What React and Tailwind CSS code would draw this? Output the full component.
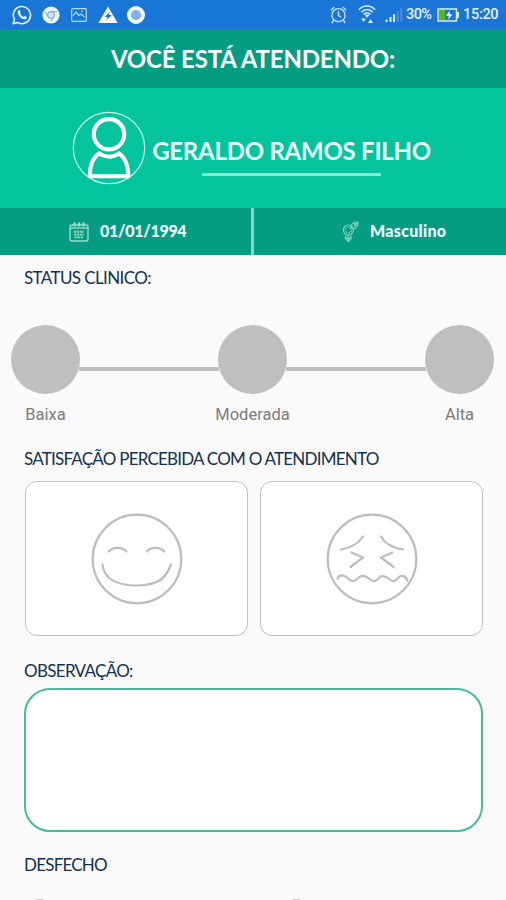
import React from "react";

const sectionLabel = "whitespace-nowrap font-['Lato',sans-serif] text-[17px] leading-[20px] text-[#15304f]";

function WhatsApp() {
  return (
    <svg width="20" height="20" viewBox="0 0 20 20" fill="none" stroke="#e6f2ff">
      <path d="M1.200 18.800 2.400 14.200A8.600 8.600 0 1 1 5.800 17.600Z" strokeWidth="1.600" strokeLinejoin="round" />
      <path d="M6.300 5.500c.7-.8 1.400-.6 1.700.1l.7 1.500c.2.500-.7 1.200-.6 1.500.7 1.500 1.700 2.500 3.200 3.100.4.1 1-.9 1.500-.8l1.600.8c.7.300.4 1.200 0 1.700-1.400 1.600-4 .8-6-1C6.400 10.600 5 7.400 6.300 5.500Z" fill="#e6f2ff" stroke="none" />
    </svg>
  );
}

function Chrome() {
  return (
    <svg width="18" height="18" viewBox="0 0 18 18">
      <circle cx="9" cy="9" r="8.600" fill="#f0f7ff" />
      <circle cx="9" cy="9" r="3.300" fill="#dcebfa" stroke="#6fa5dc" strokeWidth="1.100" />
      <path d="M9 5.700h6.200M6.100 10.600 2.900 5.200M11.900 10.600 9 15.600" stroke="#6fa5dc" strokeWidth="1" />
    </svg>
  );
}

function Picture() {
  return (
    <svg width="16" height="14" viewBox="0 0 16 14" fill="none" stroke="#b9dbfa" strokeWidth="1.200">
      <rect x=".7" y=".7" width="14.600" height="12.600" rx="1" />
      <path d="m2 8 3-4 3 3.500 2-1.500 3.500 3M10 3.500h2" />
    </svg>
  );
}

function Triangle() {
  return (
    <svg width="20" height="18" viewBox="0 0 20 18">
      <path d="M10 .6 19.600 17H.4Z" fill="#fff" />
      <path d="m12.500 5.500-5.700 5.300 3 .5-2 3.400 6-5.400-3-.5Z" fill="#1976d2" />
    </svg>
  );
}

function Alarm() {
  return (
    <svg width="17" height="18" viewBox="0 0 17 18" fill="none" stroke="#c9e2fa" strokeWidth="1.400">
      <circle cx="8.500" cy="9.200" r="6.600" />
      <path d="M8.500 5v4.500l2.500 1.800M.8 4.300 4.300 1M16.200 4.300 12.700 1M3.700 14.200 1.900 17M13.300 14.200l1.800 2.800" />
    </svg>
  );
}

function Wifi() {
  return (
    <svg width="18" height="19" viewBox="0 0 18 19" fill="none" stroke="#d5e9fc" strokeWidth="1.500">
      <path d="M.8 4.700C5.500-.2 12.500-.2 17.200 4.700M3.200 7.200c3.500-3.700 8.100-3.700 11.600 0M5.600 9.500c2-2.200 4.800-2.200 6.800 0" />
      <path d="m6.300 9.500 2.700 3.300 2.700-3.300ZM3 13.500h5L5.500 17ZM10 18h5l-2.500-4Z" fill="#e5f2ff" stroke="none" />
    </svg>
  );
}

function Signal() {
  return (
    <svg width="18" height="14" viewBox="0 0 18 14">
      <path d="M.5 11.500h2V14h-2zM4.500 9h2v5h-2zM8 6h2v8H8z" fill="#d9ebfc" />
      <path d="M11.500 3h2.500v11h-2.500zM15 0h2.500v14H15z" fill="#4089de" />
    </svg>
  );
}

function Battery() {
  return (
    <svg width="23" height="14" viewBox="0 0 23 14" fill="none">
      <rect x="1" y="1" width="18.500" height="12" stroke="#d9ecdf" strokeWidth="1.500" />
      <path d="M2 2h6v10H2z" fill="#58b51c" />
      <path d="M21 4v6" stroke="#d9ecdf" strokeWidth="2" />
      <path d="m13 2.500-4 5 3 .3-1 4 4.300-5.300-3-.3Z" fill="#fff" />
    </svg>
  );
}

function Avatar() {
  return (
    <svg width="74" height="74" viewBox="0 0 74 74" fill="none" stroke="#fff">
      <circle cx="37" cy="37" r="35.700" strokeWidth="1.200" stroke="#c8f7e9" />
      <circle cx="37" cy="23.300" r="15.200" strokeWidth="4.200" />
      <path d="M27.300 42.300C20.500 46.500 18 54 17.700 65.300H56.500C56 54 53.500 46.500 46.800 42.300 41 46.800 33 46.800 27.300 42.300Z" strokeWidth="4" strokeLinejoin="round" />
    </svg>
  );
}

function Calendar() {
  return (
    <svg width="20" height="20" viewBox="0 0 20 20" fill="none" stroke="#9cdcc9" strokeWidth="1.400">
      <rect x="1" y="3" width="18" height="16" rx="2" />
      <path d="M1.500 6h17" />
      <path d="M5.500.6v4M10 .6v4M14.500.6v4" strokeWidth="2.200" />
      <path d="M5 9.800h10M5 12.600h10M5.500 15.400h8.500" strokeDasharray="2.300 .8" strokeWidth="1.900" />
    </svg>
  );
}

function Gender() {
  return (
    <svg width="17" height="22" viewBox="0 0 17 22" fill="none" stroke="#7fd0ba" strokeWidth="1.200">
      <circle cx="6.300" cy="9" r="5" />
      <circle cx="6.300" cy="9" r="3" strokeDasharray="2 1" />
      <circle cx="11.700" cy="5" r="2.600" />
      <path d="M11.500 1h4.300v4.500M12 5l3.500-3.700M6.300 14v7M2.800 17.200h7M3.500 14.500v2.700l2.800 3.500 2.800-3.500v-2.700" />
    </svg>
  );
}

function HappyFace() {
  return (
    <svg width="92" height="92" viewBox="0 0 92 92" fill="none" stroke="#bdbdbd" strokeWidth="2.200" strokeLinecap="round">
      <circle cx="46" cy="46" r="44.300" />
      <path d="M18 38.500C22 33.700 31 33.700 35.500 38.500M56 38.500C60 33.700 69 33.700 73.500 38.500" />
      <path d="M11.500 51.500C13 65 23 72.500 46 72.500S75.500 63.500 80 51.500" />
    </svg>
  );
}

function SadFace() {
  return (
    <svg width="92" height="92" viewBox="0 0 92 92" fill="none" stroke="#bdbdbd" strokeWidth="2.200" strokeLinecap="round" strokeLinejoin="round">
      <circle cx="46" cy="46" r="44.300" />
      <path d="M15 36.500C24 35 32 31 37 23.500M55 23.500C59 31 67 35 77 36.500" />
      <path d="M25.500 39.500 37 44.500 24.500 54M66.500 39.500 55 44.500 67.500 54" />
      <path d="M11.500 66C13 60.500 19 62 22 65.500 26 69.500 29 68.500 32 65 35 61.500 40 62.500 43 65.500 47 69.500 50 68.500 53 65 56 61.500 60 63.500 63 66 67 69.500 69 68.500 72 65 75 61 80 63 81.500 68" />
    </svg>
  );
}

function Level({ label }) {
  return (
    <div className="flex w-[69px] flex-col items-center">
      <div className="size-[69px] shrink-0 rounded-full bg-[#bfbfbf]" />
      <span className="mt-[11px] whitespace-nowrap font-['Roboto',sans-serif] text-[16.500px] leading-[20px] text-[#7c7c7c]">{label}</span>
    </div>
  );
}

export default function App() {
  return (
    <div className="flex h-[900px] w-[506px] flex-col overflow-hidden bg-[#fafafa]">
      <div className="flex h-[29px] shrink-0 items-center justify-between bg-[#1976d6] pl-[12px] pr-[8px]">
        <div className="flex items-center">
          <WhatsApp />
          <div className="ml-[10px]"><Chrome /></div>
          <div className="ml-[11px]"><Picture /></div>
          <div className="ml-[11px]"><Triangle /></div>
          <div className="ml-[9px] size-[18px] rounded-full border-[4px] border-[#f3f8ff] bg-[#7fb0e8]" />
        </div>
        <div className="flex items-center">
          <Alarm />
          <div className="ml-[11px]"><Wifi /></div>
          <div className="ml-[9px]"><Signal /></div>
          <span className="ml-[3px] w-[28px] whitespace-nowrap font-['Roboto',sans-serif] text-[14.500px] font-medium tracking-[-0.600px] text-[#e3f0fd]">30%</span>
          <div className="ml-[3px]"><Battery /></div>
          <span className="ml-[3px] w-[35px] whitespace-nowrap font-['Roboto',sans-serif] text-[14.500px] font-medium tracking-[-0.300px] text-[#e3f0fd]">15:20</span>
        </div>
      </div>

      <header className="flex h-[59px] shrink-0 items-center justify-center bg-[#049d82] text-white">
        <h1 className="whitespace-nowrap font-['Lato',sans-serif] text-[24px] font-bold leading-[30px] tracking-[-0.170px]">VOCÊ ESTÁ ATENDENDO:</h1>
      </header>

      <section className="flex h-[120px] shrink-0 items-center bg-[#04c49d] pl-[72px]">
        <Avatar />
        <div className="ml-[6px] flex w-[279px] flex-col items-center pt-[16px]">
          <h2 className="whitespace-nowrap font-['Lato',sans-serif] text-[24px] font-bold leading-[30px] tracking-[-0.250px] text-[#e9fff9]">GERALDO RAMOS FILHO</h2>
          <div className="mt-[7px] h-[3px] w-[179px] bg-[#90e6d1]" />
        </div>
      </section>

      <section className="flex h-[47px] shrink-0 bg-[#049d82] font-['Lato',sans-serif] text-[16px] font-black leading-[20px] text-[#f0fffb]">
        <div className="flex w-[251px] items-center pl-[69px]">
          <Calendar />
          <span className="ml-[11px] whitespace-nowrap pb-[2px] tracking-[-0.300px]">01/01/1994</span>
        </div>
        <div className="w-[3px] bg-[#8fd2c4]" />
        <div className="flex items-center pl-[88px]">
          <Gender />
          <span className="ml-[11px] whitespace-nowrap pb-[2px] tracking-[0.300px]">Masculino</span>
        </div>
      </section>

      <main className="flex flex-1 flex-col">
        <p className={sectionLabel + " mt-[13px] pl-[24px] tracking-[-0.620px]"}>STATUS CLINICO:</p>
        <div className="mt-[37px] flex h-[99px] shrink-0 pl-[11px]">
          <Level label="Baixa" />
          <div className="-mx-px mt-[42px] h-[4px] w-[140px] bg-[#bfbfbf]" />
          <Level label="Moderada" />
          <div className="-mx-px mt-[42px] h-[4px] w-[140px] bg-[#bfbfbf]" />
          <Level label="Alta" />
        </div>

        <p className={sectionLabel + " mt-[25px] pl-[24px] tracking-[-0.770px]"}>SATISFAÇÃO PERCEBIDA COM O ATENDIMENTO</p>
        <div className="mt-[12px] flex gap-[12px] pl-[25px]">
          <button className="flex h-[155px] w-[223px] items-center justify-center rounded-[12px] border-[1.500px] border-[#bfbfbf] bg-white"><HappyFace /></button>
          <button className="flex h-[155px] w-[223px] items-center justify-center rounded-[12px] border-[1.500px] border-[#bfbfbf] bg-white"><SadFace /></button>
        </div>

        <p className={sectionLabel + " mt-[25px] pl-[24px] tracking-[-0.680px]"}>OBSERVAÇÃO:</p>
        <div className="ml-[24px] mt-[7px] h-[144px] w-[459px] shrink-0 rounded-[26px] border-2 border-[#45bd9d] bg-white" />
        <p className={sectionLabel + " mt-[23px] pl-[24px] tracking-[-0.770px]"}>DESFECHO</p>
        <div className="mt-[24px] flex pl-[36px]">
          <div className="h-px w-[7px] bg-[#c9c9c9]" />
          <div className="ml-[250px] h-px w-[7px] bg-[#c9c9c9]" />
        </div>
      </main>
    </div>
  );
}
